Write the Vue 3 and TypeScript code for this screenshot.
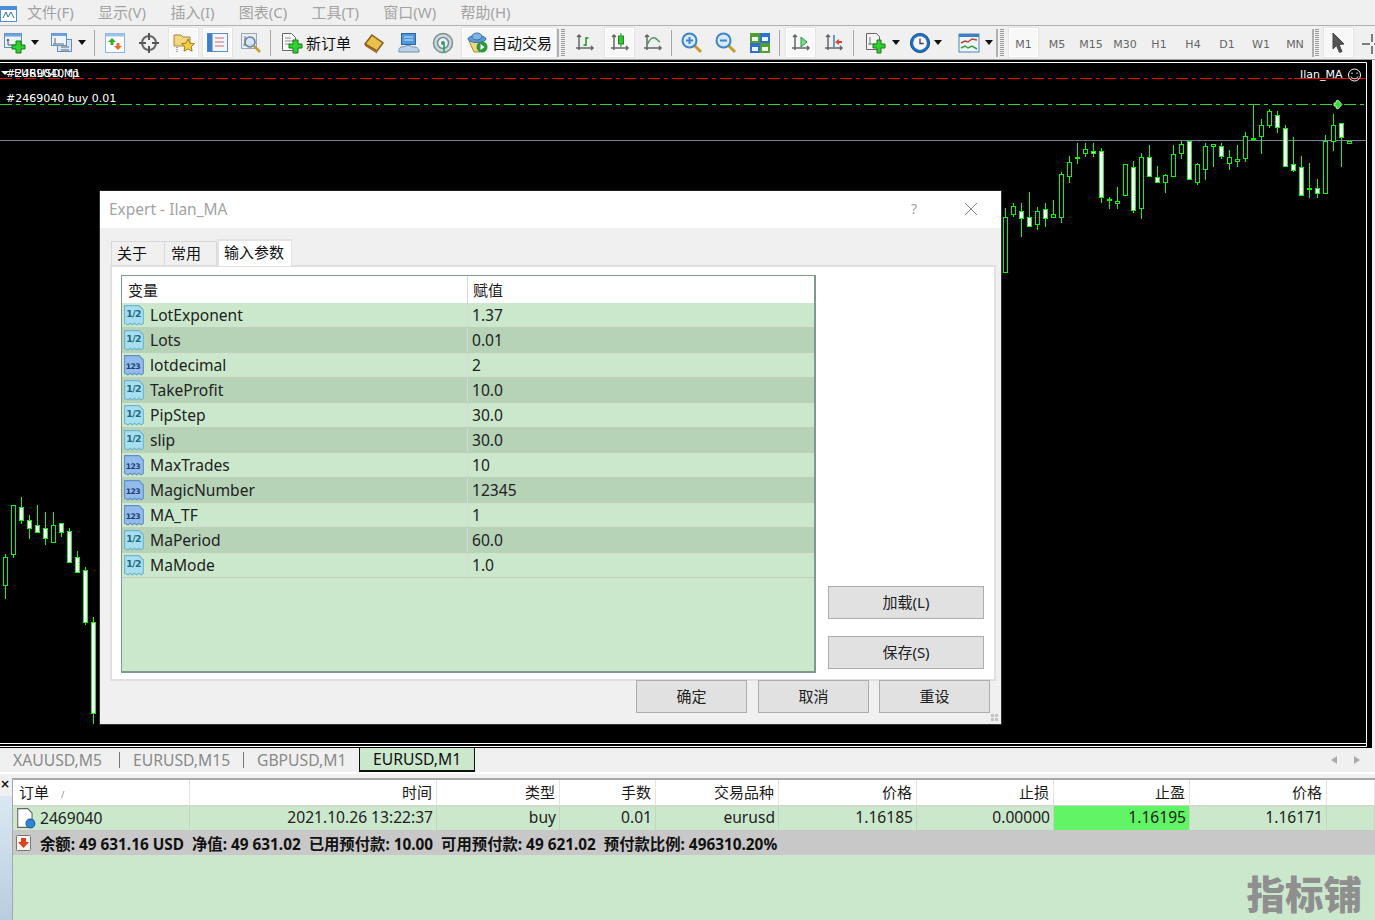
<script setup lang="ts">
interface Candle { x: number; hi: number; lo: number; top: number; bot: number; solid: boolean }
type Raw = [number, number, number, number, number, number]

const rightRaw: Raw[] = [
  [271,625,820,650,816,0],[295,608,650,617,641,0],[319,610,710,632,655,1],[343,576,680,650,679,1],
  [367,622,690,632,671,0],[391,610,680,626,655,1],[415,600,655,641,650,0],[439,515,670,523,650,0],
  [463,468,548,485,529,0],[487,430,491,470,475,0],[511,430,470,446,460,0],[535,430,470,452,459,1],
  [559,445,610,452,592,1],[583,590,627,598,599,0],[607,562,627,602,610,0],[631,491,586,491,586,0],
  [655,484,640,500,631,1],[679,460,657,470,625,0],[703,435,530,470,529,1],[727,498,548,530,547,1],
  [751,523,578,524,547,0],[775,435,530,461,529,0],[799,422,476,431,460,0],[823,422,538,422,538,1],
  [847,490,555,491,547,0],[871,430,540,437,508,0],[895,431,500,431,437,0],[919,430,476,437,469,1],
  [943,450,510,470,490,0],[967,435,500,476,484,0],[991,396,485,407,475,0],[1015,314,422,413,414,0],
  [1039,358,462,374,407,0],[1063,328,384,334,374,0],[1087,334,398,344,382,1],[1111,374,499,383,499,1],
  [1135,412,515,491,509,1],[1159,468,586,500,586,1],[1183,490,594,563,568,1],[1207,538,594,563,578,1],
  [1231,405,578,422,578,0],[1255,343,453,374,422,0],[1279,368,500,368,412,1],[1303,422,430,422,430,0]
]
const leftRaw: Raw[] = [
  [16,222,356,232,316,0],[40,76,233,76,223,0],[64,52,131,82,121,1],[88,105,176,121,145,1],
  [112,76,160,136,155,1],[136,97,194,145,175,1],[160,97,185,136,185,0],[184,130,170,130,155,1],
  [208,145,247,154,247,1],[232,213,277,232,277,1],[256,262,434,271,427,1],[280,412,731,427,700,1]
]
const conv = (r: Raw, ox: number, oy: number): Candle => ({
  x: Math.round(r[0] / 3) + ox + 0.5,
  hi: Math.round(r[1] / 3) + oy,
  lo: Math.round(r[2] / 3) + oy,
  top: Math.round(r[3] / 3) + oy + 0.5,
  bot: Math.round(r[4] / 3) + oy + 0.5,
  solid: r[5] === 1
})
const candles: Candle[] = [
  ...rightRaw.map(r => conv(r, 915, 0)),
  ...leftRaw.map(r => conv(r, 0, 480))
]

const menus = ['文件(F)', '显示(V)', '插入(I)', '图表(C)', '工具(T)', '窗口(W)', '帮助(H)']
const frames = ['M1', 'M5', 'M15', 'M30', 'H1', 'H4', 'D1', 'W1', 'MN']
const params = [
  { n: 'LotExponent', v: '1.37', t: 'd' }, { n: 'Lots', v: '0.01', t: 'd' },
  { n: 'lotdecimal', v: '2', t: 'i' }, { n: 'TakeProfit', v: '10.0', t: 'd' },
  { n: 'PipStep', v: '30.0', t: 'd' }, { n: 'slip', v: '30.0', t: 'd' },
  { n: 'MaxTrades', v: '10', t: 'i' }, { n: 'MagicNumber', v: '12345', t: 'i' },
  { n: 'MA_TF', v: '1', t: 'i' }, { n: 'MaPeriod', v: '60.0', t: 'd' }, { n: 'MaMode', v: '1.0', t: 'd' }
]
const heads = ['时间', '类型', '手数', '交易品种', '价格', '止损', '止盈', '价格']
const cells = ['2021.10.26 13:22:37', 'buy', '0.01', 'eurusd', '1.16185', '0.00000', '1.16195', '1.16171']
</script>

<template>
  <div class="app">
    <svg class="sprite" aria-hidden="true">
      <defs>
        <symbol id="chartdoc" viewBox="0 0 22 22">
          <rect x="0.5" y="1.5" width="17" height="14" fill="#eaf2fb" stroke="#5a8fc8"/>
          <rect x="0.5" y="1.5" width="17" height="3" fill="#6fa3dc"/>
          <path d="M4 7v6h8M4 7l-1 2M4 7l1 2" fill="none" stroke="#555"/>
          <path d="M12 6h5v4h4v4h-4v4h-5v-4H8v-4h4z" transform="translate(0 3)" fill="#2fd02f" stroke="#187a18"/>
        </symbol>
        <symbol id="profiles" viewBox="0 0 22 22">
          <rect x="6.5" y="7.5" width="14" height="12" fill="#d8e6f6" stroke="#5a8fc8"/>
          <rect x="0.5" y="1.5" width="15" height="12" fill="#eef4fb" stroke="#5a8fc8"/>
          <rect x="0.5" y="1.5" width="15" height="2.5" fill="#6fa3dc"/>
          <path d="M4 6v6M2 12h11M10 15h8M10 18h8" stroke="#666" fill="none"/>
        </symbol>
        <symbol id="market" viewBox="0 0 22 22">
          <rect x="1.5" y="1.5" width="19" height="19" fill="#fff" stroke="#8db4de"/>
          <rect x="1.5" y="1.5" width="19" height="3" fill="#9cc3ea"/>
          <path d="M8 6l4 4H9.5v3h-3v-3H4z" fill="#2bb02b"/>
          <path d="M14 18l-4-4h2.5v-3h3v3H18z" fill="#e8692b"/>
        </symbol>
        <symbol id="target" viewBox="0 0 22 22">
          <circle cx="11" cy="11" r="7" fill="none" stroke="#666" stroke-width="2"/>
          <path d="M11 1v7M11 14v7M1 11h7M14 11h7" stroke="#555" stroke-width="2"/>
        </symbol>
        <symbol id="folder" viewBox="0 0 22 22">
          <path d="M1 3h7l2 2h7v9H1z" fill="#f3d680" stroke="#a58a3a"/>
          <path d="M4 15v5" stroke="#555" stroke-dasharray="1 1"/>
          <path d="M15 7l2 4.200 4.500.5-3.300 3 .9 4.500-4.100-2.300-4 2.300.9-4.500-3.300-3 4.500-.5z" fill="#f5cf3a" stroke="#9a7f26"/>
        </symbol>
        <symbol id="nav" viewBox="0 0 22 22">
          <rect x="0.5" y="1.500" width="20" height="18" fill="#f2f6fb" stroke="#5a8fc8"/>
          <rect x="0.5" y="1.500" width="5" height="18" fill="#3f7fc6"/>
          <path d="M8 6h9M8 10h9M8 14h9" stroke="#d06a6a"/>
        </symbol>
        <symbol id="term" viewBox="0 0 22 22">
          <rect x="1.500" y="1.500" width="15" height="15" fill="#e9eef4" stroke="#9aa7b6"/>
          <path d="M5 4v9M3 13h10" stroke="#777" fill="none"/>
          <circle cx="10" cy="10" r="5" fill="#cfe3f5" fill-opacity=".8" stroke="#5f7f9f" stroke-width="1.500"/>
          <path d="M14 14l6 6" stroke="#c79a2d" stroke-width="2.500"/>
        </symbol>
        <symbol id="order" viewBox="0 0 22 22">
          <path d="M1.500 1.500h9l4 4v13h-13z" fill="#fbfbfb" stroke="#666"/>
          <path d="M4 6h6M4 9h8M4 12h5" stroke="#8a8a8a"/>
          <path d="M12 8h5v4h4v4h-4v5h-5v-5H8v-4h4z" fill="#2fd02f" stroke="#187a18"/>
        </symbol>
        <symbol id="gold" viewBox="0 0 22 22">
          <path d="M8 3l11 8-6 8L1 12z" fill="#e9c14a" stroke="#8a5a1c" stroke-width="1.500"/>
          <path d="M1 12l12 8 0 1.500L1 14z" fill="#9a6a24"/>
        </symbol>
        <symbol id="blue" viewBox="0 0 22 22">
          <rect x="3.500" y="1.500" width="14" height="11" fill="#4f97dd" stroke="#2c66a8"/>
          <path d="M6 5h9M6 8h9" stroke="#cfe5fa"/>
          <path d="M1 20c-1-4 2-6 5-5 1-2 7-2 8 0 4-1 8 2 7 5z" fill="#bcd2e8" stroke="#6f8fae"/>
        </symbol>
        <symbol id="radar" viewBox="0 0 22 22">
          <circle cx="11" cy="11" r="9.500" fill="#cfd8d8" stroke="#7f9090" stroke-width="1.500"/>
          <circle cx="11" cy="11" r="5.500" fill="#eef2f2" stroke="#6c8fa5" stroke-width="1.500"/>
          <circle cx="11" cy="11" r="2" fill="#4f8f6f"/>
          <path d="M12 12v9" stroke="#3fae5f" stroke-width="2"/>
        </symbol>
        <symbol id="auto" viewBox="0 0 24 22">
          <path d="M3 9l14 0-3 11H8z" fill="#f0d77f" stroke="#a58a3a"/>
          <ellipse cx="11" cy="7" rx="9" ry="3.500" fill="#5a9bd8" stroke="#3c6f9f"/>
          <ellipse cx="11" cy="4.500" rx="5" ry="3.500" fill="#7fb5e6" stroke="#3c6f9f"/>
          <circle cx="16" cy="15" r="5.500" fill="#2d9b3c"/>
          <path d="M14.500 12l4 3-4 3z" fill="#fff"/>
        </symbol>
        <symbol id="bars" viewBox="0 0 22 22">
          <path d="M5 3v15M2 16h17M3 5l2-2 2 2M17 14l2 2-2 2" fill="none" stroke="#666" stroke-width="1.500"/>
          <path d="M12 5v9M12 6h2.500M12 13H9.500" stroke="#1e9a1e" stroke-width="1.500" fill="none"/>
        </symbol>
        <symbol id="candle" viewBox="0 0 22 22">
          <path d="M5 3v15M2 16h17M3 5l2-2 2 2M17 14l2 2-2 2" fill="none" stroke="#666" stroke-width="1.500"/>
          <path d="M12 1v14" stroke="#1e9a1e"/>
          <rect x="9.500" y="4" width="5" height="8" fill="#35c435" stroke="#1e8a1e"/>
        </symbol>
        <symbol id="linec" viewBox="0 0 22 22">
          <path d="M5 3v15M2 16h17M3 5l2-2 2 2M17 14l2 2-2 2" fill="none" stroke="#666" stroke-width="1.500"/>
          <path d="M5 13c3-7 6-8 8-7s3 3 5 4" stroke="#4f9a5f" stroke-width="1.500" fill="none"/>
        </symbol>
        <symbol id="zin" viewBox="0 0 22 22">
          <path d="M13 13l7 7" stroke="#c79a2d" stroke-width="3"/>
          <circle cx="8.500" cy="8.500" r="7" fill="#d8eaf8" stroke="#3f86c6" stroke-width="2"/>
          <path d="M5 8.500h7M8.500 5v7" stroke="#3f86c6" stroke-width="2"/>
        </symbol>
        <symbol id="zout" viewBox="0 0 22 22">
          <path d="M13 13l7 7" stroke="#c79a2d" stroke-width="3"/>
          <circle cx="8.500" cy="8.500" r="7" fill="#d8eaf8" stroke="#3f86c6" stroke-width="2"/>
          <path d="M5 8.500h7" stroke="#3f86c6" stroke-width="2"/>
        </symbol>
        <symbol id="tile" viewBox="0 0 22 22">
          <rect x="1" y="1" width="10" height="10" fill="#4fa02f"/>
          <rect x="11" y="1" width="10" height="10" fill="#2f6fd0"/>
          <rect x="1" y="11" width="10" height="10" fill="#2f6fd0"/>
          <rect x="11" y="11" width="10" height="10" fill="#4fa02f"/>
          <path d="M3 5h6v4H3zM13 5h6v4h-6zM3 15h6v4H3zM13 15h6v4h-6z" fill="#eef4fb"/>
        </symbol>
        <symbol id="shift" viewBox="0 0 22 22">
          <path d="M5 3v15M2 16h17M3 5l2-2 2 2M17 14l2 2-2 2" fill="none" stroke="#666" stroke-width="1.500"/>
          <path d="M11 5l6 5-6 5z" fill="#7fd88f" stroke="#1e9a3e"/>
        </symbol>
        <symbol id="scroll" viewBox="0 0 22 22">
          <path d="M5 3v15M2 16h17M3 5l2-2 2 2M17 14l2 2-2 2" fill="none" stroke="#666" stroke-width="1.500"/>
          <path d="M11 3v12" stroke="#3f7fc6" stroke-width="1.500"/>
          <path d="M19 9h-3V7l-4 3 4 3v-2h3z" fill="#d8452b"/>
        </symbol>
        <symbol id="tmpl" viewBox="0 0 22 22">
          <path d="M1.500 1.500h10l3 3v13h-13z" fill="#f6f6f6" stroke="#666"/>
          <path d="M5 5v8M3 12h8" stroke="#777" fill="none"/>
          <path d="M12 8h4v4h4v4h-4v5h-4v-5H8v-4h4z" fill="#2fd02f" stroke="#187a18"/>
        </symbol>
        <symbol id="clock" viewBox="0 0 24 24">
          <circle cx="12" cy="12" r="10.500" fill="#1f6fc0" stroke="#134a85"/>
          <circle cx="12" cy="12" r="7.500" fill="#f4f8fc"/>
          <path d="M12 7v5.500h4" stroke="#444" stroke-width="1.500" fill="none"/>
        </symbol>
        <symbol id="indic" viewBox="0 0 22 22">
          <rect x="1" y="2" width="20" height="18" fill="#eef4fb" stroke="#4f86c0"/>
          <rect x="1" y="2" width="20" height="3" fill="#3f7fc6"/>
          <path d="M3 11l4-2 3 1 4-3 5 1" stroke="#b5482b" fill="none" stroke-width="1.500"/>
          <path d="M3 16l4-2 3 2 4-2 5 3" stroke="#3f9a3f" fill="none" stroke-width="1.500"/>
        </symbol>
        <symbol id="arrow" viewBox="0 0 22 22">
          <path d="M5 1l11 11-5 .5 3 7-2.500 1-3-7L5 17z" fill="#555" stroke="#444"/>
        </symbol>
        <symbol id="cross" viewBox="0 0 22 22">
          <path d="M10 2v8M10 14v8M0 12h8M12 12h10" stroke="#555" stroke-width="1.500"/>
        </symbol>
      </defs>
    </svg>

    <header class="menu">
      <svg class="logo" viewBox="0 0 18 18">
        <rect x="0.500" y="2.500" width="16" height="15" fill="#fff" stroke="#4a90d9"/>
        <path d="M1 3h15v3H1z" fill="#4a90d9"/>
        <path d="M3 14l3-6 2 5 3-5 3 6" fill="none" stroke="#2f6fb0"/>
      </svg>
      <nav class="menu-items"><span v-for="m in menus" :key="m">{{ m }}</span></nav>
    </header>

    <div class="toolbar">
      <div class="drop d1"><svg class="ico"><use href="#chartdoc"/></svg><i class="caret"/></div>
      <div class="drop d2"><svg class="ico"><use href="#profiles"/></svg><i class="caret"/></div>
      <b class="sep"/>
      <div class="tool"><svg class="ico"><use href="#market"/></svg></div>
      <div class="tool"><svg class="ico"><use href="#target"/></svg></div>
      <div class="tool on"><svg class="ico"><use href="#folder"/></svg></div>
      <div class="tool on"><svg class="ico"><use href="#nav"/></svg></div>
      <div class="tool"><svg class="ico"><use href="#term"/></svg></div>
      <b class="sep"/>
      <div class="textbtn order"><svg class="ico"><use href="#order"/></svg><span>新订单</span></div>
      <div class="tool"><svg class="ico"><use href="#gold"/></svg></div>
      <div class="tool"><svg class="ico"><use href="#blue"/></svg></div>
      <div class="tool"><svg class="ico"><use href="#radar"/></svg></div>
      <div class="textbtn autotrade"><svg class="ico wide"><use href="#auto"/></svg><span>自动交易</span></div>
      <div class="grip g1"/>
      <div class="tool"><svg class="ico"><use href="#bars"/></svg></div>
      <div class="tool on"><svg class="ico"><use href="#candle"/></svg></div>
      <div class="tool"><svg class="ico"><use href="#linec"/></svg></div>
      <b class="sep narrow"/>
      <div class="tool"><svg class="ico"><use href="#zin"/></svg></div>
      <div class="tool"><svg class="ico"><use href="#zout"/></svg></div>
      <div class="tool"><svg class="ico"><use href="#tile"/></svg></div>
      <b class="sep"/>
      <div class="tool on shifted"><svg class="ico"><use href="#shift"/></svg></div>
      <div class="tool"><svg class="ico"><use href="#scroll"/></svg></div>
      <b class="sep"/>
      <div class="drop d3"><svg class="ico"><use href="#tmpl"/></svg><i class="caret"/></div>
      <div class="drop d4"><svg class="ico"><use href="#clock"/></svg><i class="caret"/></div>
      <div class="drop d5"><svg class="ico"><use href="#indic"/></svg><i class="caret"/></div>
      <div class="grip g2"/>
      <div v-for="(f, i) in frames" :key="f" class="tool frame" :class="{ on: i === 0 }">{{ f }}</div>
      <div class="grip g3"/>
      <div class="tool on"><svg class="ico"><use href="#arrow"/></svg></div>
      <div class="tool last"><svg class="ico"><use href="#cross"/></svg></div>
    </div>

    <main class="chartwrap">
      <svg class="chart" viewBox="0 60 1372 688">
        <rect x="0" y="60" width="1372" height="688" fill="#000"/>
        <path d="M0 62.500H1366.500V746.500H0M0 743.500H1366" fill="none" stroke="#fff"/>
        <path d="M0 140.500H1366" stroke="#76838f"/>
        <path d="M0 78.500H1294" stroke="#f00" stroke-dasharray="12 4 4 4"/>
        <path d="M1294 78.500H1366" stroke="#f00"/>
        <path d="M0 104.500H1366" stroke="#2fd42f" stroke-dasharray="12 4 4 4"/>
        <g v-for="(c, i) in candles" :key="i">
          <path :d="`M${c.x} ${c.hi}V${c.lo}`" stroke="#00ff00"/>
          <rect :x="c.x - 2" :y="c.top" width="4" :height="Math.max(c.bot - c.top, 1)"
                :fill="c.solid ? '#fff' : '#000'" stroke="#00ff00"/>
        </g>
        <path d="M1 71h8l-4 4z" fill="#fff"/>
        <text class="ct" x="6" y="77" fill="#fff">#2469040 tp</text>
        <text class="ct" x="14" y="77" fill="#fff">EURUSD,M1</text>
        <text class="ct" x="6" y="102" fill="#fff">#2469040 buy 0.01</text>
        <text class="ct" x="1300" y="78" fill="#fff">Ilan_MA</text>
        <path d="M1338 100l4 4.500-4 4.500-2-1v-2h-2v-3h2v-2z" fill="#2fe02f" stroke="#fff" stroke-width=".7"/>
        <g fill="none" stroke="#fff">
          <circle cx="1354.500" cy="75" r="6"/>
          <path d="M1351 76.500c1 3 6 3 7 0"/>
        </g>
        <path d="M1352 72.500v1.500M1357 72.500v1.500" stroke="#fff"/>
      </svg>

      <section class="dlg">
        <div class="dlg-title">
          <span class="dlg-name">Expert - Ilan_MA</span>
          <span class="dlg-help">?</span>
          <svg class="dlg-x" viewBox="0 0 14 14"><path d="M1 1l12 12M13 1L1 13" stroke="#888"/></svg>
        </div>
        <div class="dlg-body">
          <div class="tabs">
            <span class="tab">关于</span>
            <span class="tab second">常用</span>
            <span class="tab active">输入参数</span>
          </div>
          <div class="panel">
            <div class="ptable">
              <div class="phead"><span class="pc1">变量</span><span class="pc2">赋值</span></div>
              <div v-for="(p, i) in params" :key="p.n" class="prow" :class="{ alt: i % 2 === 1 }">
                <span class="pc1 name">
                  <svg class="pico" viewBox="0 0 20 20">
                    <path d="M1.500 1.500h13l4 4v12l-2 1.500-2-1.500-2 1.500-2-1.500-2 1.500-2-1.500-2 1.500-3-1.500z"
                          :fill="p.t === 'd' ? '#a7dff0' : '#93bcec'" :stroke="p.t === 'd' ? '#6fb4cf' : '#5f8fc8'"/>
                    <text v-if="p.t === 'd'" x="3" y="12" class="pt">1/2</text>
                    <text v-else x="2.500" y="14" class="pt small">123</text>
                  </svg>
                  {{ p.n }}
                </span>
                <span class="pc2">{{ p.v }}</span>
              </div>
            </div>
            <div class="pside">
              <button class="btn side">加载(L)</button>
              <button class="btn side">保存(S)</button>
            </div>
          </div>
          <div class="actions">
            <button class="btn act">确定</button>
            <button class="btn act">取消</button>
            <button class="btn act">重设</button>
          </div>
        </div>
        <svg class="resize" viewBox="0 0 8 8"><path d="M0 0h3v3H0zM4 0h3v3H4zM0 4h3v3H0zM4 4h3v3H4z" fill="#c4c4c4"/></svg>
      </section>
    </main>

    <div class="charttabs">
      <span class="ctab">XAUUSD,M5</span>
      <span class="ctab">EURUSD,M15</span>
      <span class="ctab plain">GBPUSD,M1</span>
      <span class="ctab active">EURUSD,M1</span>
      <span class="tabnav"><i class="tl"/><i class="tr"/></span>
    </div>

    <section class="terminal">
      <aside class="strip"><span class="close">×</span><div class="stripfill"/></aside>
      <div class="tt">
        <div class="tgrid thead">
          <span class="first">订单 <em>/</em></span>
          <span v-for="(h, i) in heads" :key="i">{{ h }}</span>
          <span/>
        </div>
        <div class="tgrid trow">
          <span class="first">
            <svg class="docico" viewBox="0 0 20 20">
              <path d="M2.500 1.500h9l4 4v13h-13z" fill="#fff" stroke="#666"/>
              <circle cx="14" cy="15" r="4" fill="#2f86d8" stroke="#1c5f9f"/>
            </svg>
            2469040
          </span>
          <span v-for="(c, i) in cells" :key="i" :class="{ tp: i === 6 }">{{ c }}</span>
          <span/>
        </div>
        <div class="balance">
          <svg class="balico" viewBox="0 0 18 18">
            <rect x="1.500" y="1.500" width="14" height="15" rx="1" fill="#f8f4f0" stroke="#777"/>
            <path d="M6 4h5v4h3l-5.500 6L3 8h3z" fill="#e0401f"/>
          </svg>
          <strong>余额: 49 631.16 USD&nbsp; 净值: 49 631.02&nbsp; 已用预付款: 10.00&nbsp; 可用预付款: 49 621.02&nbsp; 预付款比例: 496310.20%</strong>
        </div>
        <div class="rest"><span class="mark">指标铺</span></div>
      </div>
    </section>
  </div>
</template>

<style>
html, body { margin: 0; padding: 0; background: #f0f0f0; }
</style>

<style scoped>
.app {
  width: 1375px; height: 920px; overflow: hidden; display: flex; flex-direction: column;
  background: #f0f0f0; color: #1a1a1a;
  font-family: "Noto Sans", "Noto Sans CJK SC", sans-serif; font-size: 15px;
}
.sprite { width: 0; height: 0; position: absolute; }

.menu { height: 25px; border-bottom: 1px solid #b0b0b0; display: flex; align-items: center; flex: none; }
.logo { width: 18px; height: 18px; margin-right: 9px; flex: none; }
.menu-items { display: flex; gap: 24.300px; color: #a3a3a3; font-size: 15px; line-height: 25px; }

.toolbar {
  height: 33px; flex: none; display: flex; align-items: center; padding-left: 4px;
  border-bottom: 1px solid #a0a0a0; overflow: hidden;
}
.ico { width: 22px; height: 22px; flex: none; }
.ico.wide { width: 24px; }
.tool {
  width: 34px; height: 31px; box-sizing: border-box; flex: none;
  display: flex; align-items: center; justify-content: center;
}
.tool.on { background: #f8f8f8; border: 2px solid #fff; outline: 1px solid #e4e4e4; outline-offset: -1px; width: 31px; margin: 0 1px 0 2px; }
.tool.shifted { margin-left: 2px; margin-right: 1px; }
.tool.last { width: 20px; justify-content: flex-start; padding-left: 7px; }
.frame { font-size: 11px; color: #666; font-family: "DejaVu Sans", sans-serif; padding-top: 3px; }
.drop { display: flex; align-items: center; height: 31px; box-sizing: border-box; flex: none; }
.caret { width: 0; height: 0; border: 4px solid transparent; border-top: 5px solid #111; border-bottom: 0; margin-left: 5px; }
.d1 { width: 47px; }
.d2 { width: 41px; }
.d3 { width: 44px; padding-left: 8px; }
.d4 { width: 47px; padding-left: 8px; }
.d4 .caret { margin-left: 3px; }
.d5 { width: 48px; padding-left: 10px; }
.sep { width: 1px; height: 26px; background: #a8a8a8; margin: 0 3px 0 2px; flex: none; }
.sep.narrow { margin: 0 3px 0 1px; }
.textbtn { display: flex; align-items: center; height: 31px; box-sizing: border-box; flex: none; font-size: 15px; color: #111; }
.order { width: 84px; padding-left: 7px; gap: 3px; }
.autotrade { width: 96px; margin-left: 1px; background: #f8f8f8; border: 2px solid #fff; outline: 1px solid #e4e4e4; outline-offset: -1px; padding-left: 3px; gap: 2px; }
.grip {
  height: 28px; flex: none;
  background-image: repeating-linear-gradient(to bottom, #9a9a9a 0 1px, transparent 1px 2px);
  background-repeat: no-repeat;
}
.g1 { width: 9px; box-sizing: content-box; border-left: 2px solid #b0b0b0; background-size: 4px 28px; background-position: 2px 0; }
.g2 { width: 10px; border-left: 2px solid #b0b0b0; background-size: 4px 28px; background-position: 2px 0; box-sizing: border-box; }
.g3 { width: 9px; border-left: 2px solid #b0b0b0; background-size: 4px 28px; background-position: 1px 0; box-sizing: border-box; }

.chartwrap { height: 688px; flex: none; position: relative; width: 1372px; }
.chart { display: block; width: 1372px; height: 688px; }
.ct { font-family: "DejaVu Sans", sans-serif; font-size: 11px; }

.dlg {
  position: absolute; left: 99px; top: 130px; width: 903px; height: 535px; box-sizing: border-box;
  border: 1px solid #333; border-top-color: #222; background: #f0f0f0; display: flex; flex-direction: column;
}
.dlg-title { height: 37px; box-sizing: border-box; padding-bottom: 2px; background: #fff; flex: none; display: flex; align-items: center; padding-left: 9px; color: #a3a3a3; }
.dlg-name { font-size: 15.500px; flex: 1; }
.dlg-help { font-size: 14px; margin-right: 47px; }
.dlg-x { width: 14px; height: 14px; margin-right: 23px; }
.dlg-body { flex: 1; padding: 11px 5px 0 10px; display: flex; flex-direction: column; }
.tabs { display: flex; align-items: flex-end; height: 26px; padding-left: 1px; position: relative; z-index: 1; }
.tab {
  height: 24px; box-sizing: border-box; width: 53px; border: 1px solid #d9d9d9; border-bottom: 0; border-right: 0;
  padding-left: 5px; font-size: 15px; line-height: 23px; color: #111;
}
.tab.second { width: 53px; padding-left: 6px; border-right: 1px solid #d9d9d9; }
.tab.active { height: 27px; width: 75px; background: #fff; border: 2px solid #e3e3e3; border-bottom: 0; border-right-width: 1px; margin-bottom: -1px; line-height: 22px; padding-left: 5px; }
.panel {
  height: 416px; box-sizing: border-box; border: 2px solid #e0e0e0; background: #fff; margin-top: 0;
  padding: 8px 9px 6px 9px; display: flex;
}
.ptable {
  width: 695px; height: 398px; box-sizing: border-box; border: 1px solid #7f9a8a;
  border-right-width: 2px; border-bottom-width: 2px; background: #cbe8cc;
}
.phead { height: 27px; background: #fff; display: flex; font-size: 15px; line-height: 28px; box-sizing: border-box; }
.prow { height: 25px; box-sizing: border-box; display: flex; border-bottom: 1px solid #bcd0bd; background: #cbe8cc; line-height: 24px; font-size: 15.600px; color: #222; }
.prow.alt { background: #b6d2b7; }
.pc1 { width: 346px; box-sizing: border-box; padding-left: 6px; border-right: 1px solid #d8d8d8; flex: none; }
.pc2 { padding-left: 5px; }
.prow .pc2 { padding-left: 4px; }
.name { display: flex; align-items: center; gap: 5px; padding-left: 1px; }
.pico { width: 22px; height: 22px; flex: none; }
.pt { font: bold 8.500px "DejaVu Sans", sans-serif; fill: #1f6a80; letter-spacing: -.6px; }
.pt.small { font-size: 7px; fill: #1c3f6f; }
.pside { margin-left: 12px; display: flex; flex-direction: column; justify-content: flex-end; gap: 17px; padding-bottom: 4px; height: 398px; box-sizing: border-box; }
.btn {
  background: #e1e1e1; border: 1px solid #adadad; height: 33px; padding: 0 0 2px; box-sizing: border-box;
  font: 15px "Noto Sans", "Noto Sans CJK SC", sans-serif; color: #222; display: block;
}
.btn.side { width: 156px; }
.actions { display: flex; margin: -1px 0 0 526px; gap: 11px; position: relative; }
.btn.act { width: 111px; }
.btn.act:last-child { margin-left: -1px; }
.resize { position: absolute; right: 2px; bottom: 2px; width: 8px; height: 8px; }

.charttabs { height: 26px; flex: none; display: flex; align-items: center; box-sizing: border-box; border-bottom: 2px solid #fff; }
.ctab { font-size: 15.700px; color: #8a8a8a; box-sizing: border-box; padding-left: 13px; height: 16px; line-height: 16px; border-right: 1px solid #777; white-space: nowrap; flex: none; }
.ctab:nth-child(1) { width: 120px; }
.ctab:nth-child(2) { width: 124px; }
.ctab.plain { border-right: 0; width: 115px; }
.ctab.active { height: 24px; width: 116px; line-height: 23px; align-self: flex-start; background: #cbe8cc; border: 1px solid #111; border-top: 0; border-bottom-width: 2px; color: #111; }
.tabnav { margin-left: auto; display: flex; gap: 17px; padding-right: 15px; }
.tl, .tr { width: 0; height: 0; border: 4px solid transparent; display: block; }
.tl { border-right: 6px solid #aaa; border-left: 0; }
.tr { border-left: 6px solid #aaa; border-right: 0; }

.terminal { flex: 1; display: flex; min-height: 0; margin-top: 4px; }
.strip { width: 12px; flex: none; display: flex; flex-direction: column; }
.close { height: 18px; font: bold 12px "DejaVu Sans", sans-serif; line-height: 12px; color: #111; }
.stripfill { flex: 1; background: linear-gradient(#dbe8f3, #b8cddf); }
.tt { flex: 1; border-top: 2px solid #a8a8a8; border-left: 1px solid #a8a8a8; display: flex; flex-direction: column; min-width: 0; }
.tgrid { display: grid; grid-template-columns: 177px 247px 123px 96px 123px 138px 137px 136px 137px 1fr; }
.thead { height: 25px; background: #fff; font-size: 15px; line-height: 25px; border-bottom: 1px solid #d0d0d0; box-sizing: content-box; }
.thead span { text-align: right; padding-right: 4px; border-right: 1px solid #e4e4e4; box-sizing: border-box; }
.thead .first, .trow .first { text-align: left; padding-left: 6px; }
.thead em { font-size: 9px; color: #888; margin-left: 8px; font-style: normal; }
.trow { height: 24px; background: #cbe8cc; line-height: 22px; font-size: 15.600px; color: #222; }
.trow span { text-align: right; padding-right: 3px; border-right: 1px solid #c4d4c4; box-sizing: border-box; }
.trow .first { display: flex; align-items: center; gap: 3px; padding-left: 2px; }
.docico { width: 22px; height: 22px; flex: none; }
.trow .tp { background: #61f565; }
.balance { height: 25px; background: #c8c8c8; display: flex; align-items: center; flex: none; font-size: 15.350px; color: #111; }
.balico { width: 18px; height: 18px; margin: 0 7px 0 2px; flex: none; }
.balance strong { white-space: nowrap; }
.rest { flex: 1; background: #cbe8cc; display: flex; justify-content: flex-end; align-items: center; padding: 8px 13px 0 0; overflow: hidden; box-sizing: border-box; }
.mark { font-size: 38.500px; font-weight: 900; line-height: 40px; color: #8f8f8f; font-family: "Noto Sans CJK SC", sans-serif; }
</style>
